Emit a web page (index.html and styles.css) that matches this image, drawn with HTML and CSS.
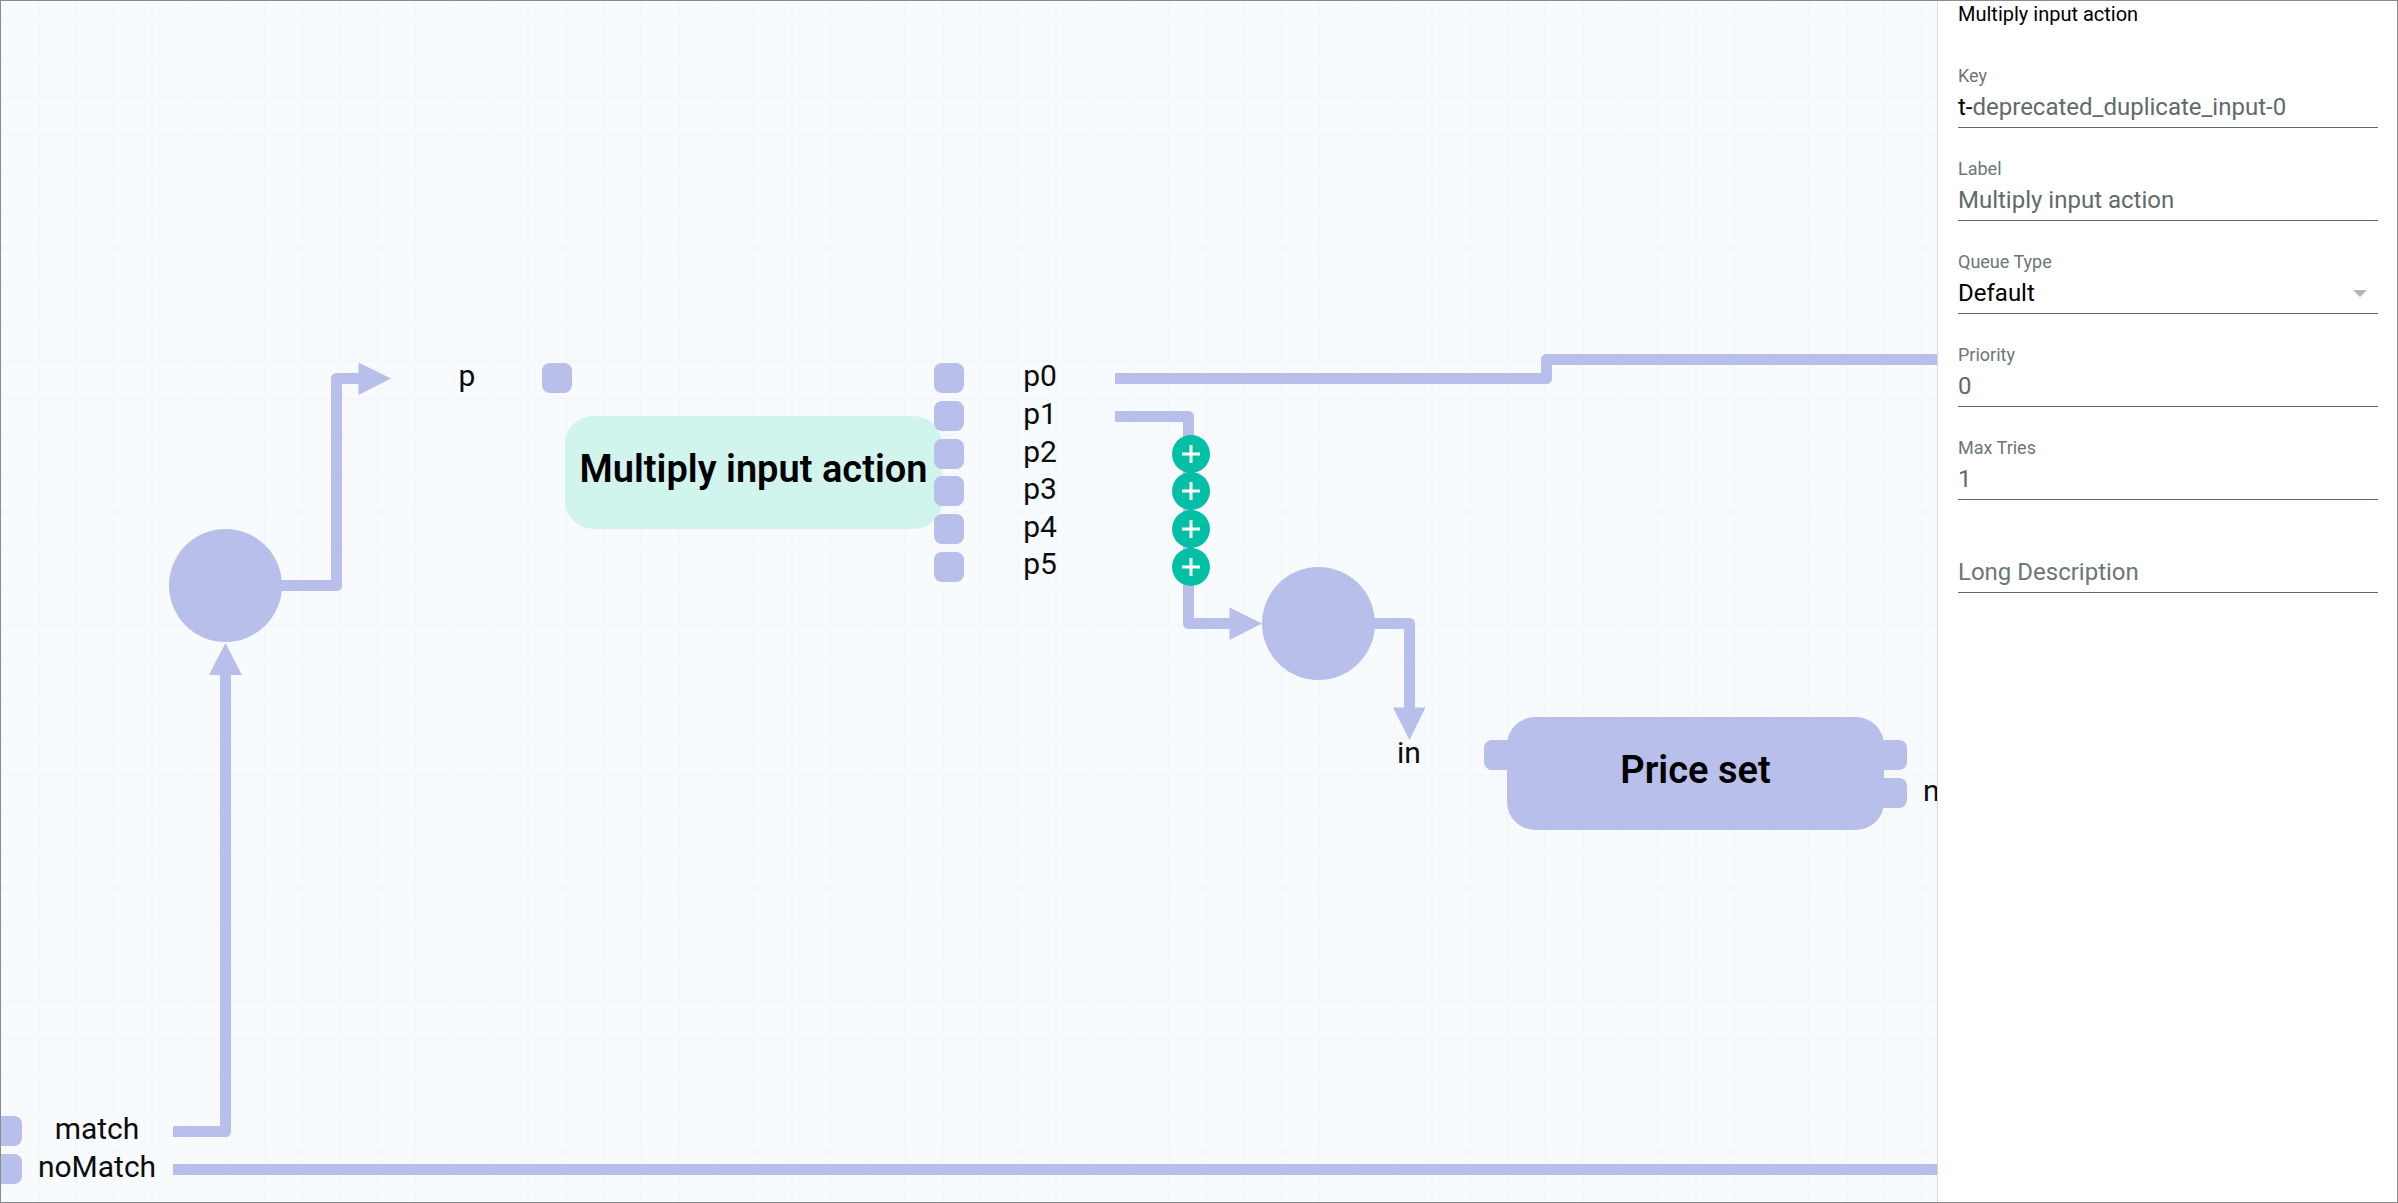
FILE: index.html
```html
<!DOCTYPE html>
<html lang="en">
<head>
<meta charset="utf-8">
<title>Flow editor</title>
<link rel="stylesheet" href="styles.css">
</head>
<body>
<div class="editor">
  <main class="canvas">
    <svg class="layer" aria-hidden="true">
      <defs>
        <pattern id="grid" width="113" height="113" y="21" patternUnits="userSpaceOnUse">
          <path class="grid-line" d="M0 0H113M0 38H113M0 75H113M0 0V113M38 0V113M75 0V113M113 0V113M0 113H113"/>
        </pattern>
      </defs>
      <rect width="100%" height="100%" fill="url(#grid)"/>
      <g class="edges">
        <path d="M172 1130.500H224.500V670"/>
        <path d="M172 1168.500H2400"/>
        <path d="M270 584.500H335.500V377.500H362"/>
        <path d="M1114 377.500H1545.500V358.500H2400"/>
        <path d="M1114 415.500H1187.500V622.500H1232"/>
        <path d="M1360 622.500H1408.500V710"/>
      </g>
      <g class="arrows">
        <path d="M357.500 361.500L390 377.500L357.500 394Z"/>
        <path d="M208 674L224.500 642L241 674Z"/>
        <path d="M1228.500 606.500L1261 622.500L1228.500 639Z"/>
        <path d="M1392 706.500L1408.500 739L1424.500 706.500Z"/>
      </g>
    </svg>

    <div class="joint" style="left:168px;top:528px"></div>
    <div class="joint" style="left:1261px;top:566px"></div>

    <div class="node node-selected" style="left:564px;top:415px">Multiply input action</div>
    <div class="node" style="left:1506px;top:716px">Price set</div>

    <i class="port" style="left:541px;top:362px"></i>
    <i class="port" style="left:933px;top:362px"></i>
    <i class="port" style="left:933px;top:400px"></i>
    <i class="port" style="left:933px;top:438px"></i>
    <i class="port" style="left:933px;top:475px"></i>
    <i class="port" style="left:933px;top:513px"></i>
    <i class="port" style="left:933px;top:551px"></i>
    <i class="port" style="left:1483px;top:739px"></i>
    <i class="port" style="left:1876px;top:739px"></i>
    <i class="port" style="left:1876px;top:777px"></i>
    <i class="port" style="left:-9px;top:1115px"></i>
    <i class="port" style="left:-9px;top:1153px"></i>

    <span class="port-label" style="left:466px;top:375px">p</span>
    <span class="port-label" style="left:1039px;top:375px">p0</span>
    <span class="port-label" style="left:1039px;top:413px">p1</span>
    <span class="port-label" style="left:1039px;top:451px">p2</span>
    <span class="port-label" style="left:1039px;top:488px">p3</span>
    <span class="port-label" style="left:1039px;top:526px">p4</span>
    <span class="port-label" style="left:1039px;top:563px">p5</span>
    <span class="port-label" style="left:1408px;top:752px">in</span>
    <span class="port-label" style="left:1981px;top:790px">noMatch</span>
    <span class="port-label" style="left:96px;top:1128px">match</span>
    <span class="port-label" style="left:96px;top:1166px">noMatch</span>

    <button class="add" type="button" aria-label="Connect p2" style="left:1171px;top:434px"><svg viewBox="0 0 38 38"><path d="M10 19H28M19 10V28"/></svg></button>
    <button class="add" type="button" aria-label="Connect p3" style="left:1171px;top:471px"><svg viewBox="0 0 38 38"><path d="M10 19H28M19 10V28"/></svg></button>
    <button class="add" type="button" aria-label="Connect p4" style="left:1171px;top:509px"><svg viewBox="0 0 38 38"><path d="M10 19H28M19 10V28"/></svg></button>
    <button class="add" type="button" aria-label="Connect p5" style="left:1171px;top:547px"><svg viewBox="0 0 38 38"><path d="M10 19H28M19 10V28"/></svg></button>
  </main>

  <aside class="panel">
    <h1 class="panel-title">Multiply input action</h1>
    <form class="fields">
      <div class="field">
        <label for="key">Key</label>
        <div class="control"><span class="prefix">t-</span><input id="key" type="text" value="deprecated_duplicate_input-0"></div>
      </div>
      <div class="field">
        <label for="label">Label</label>
        <div class="control"><input id="label" type="text" value="Multiply input action"></div>
      </div>
      <div class="field">
        <label for="queue">Queue Type</label>
        <div class="control"><select id="queue"><option>Default</option></select><svg class="caret" viewBox="0 0 14 7" aria-hidden="true"><path d="M0 0H14L7 7Z"/></svg></div>
      </div>
      <div class="field">
        <label for="priority">Priority</label>
        <div class="control"><input id="priority" type="text" inputmode="numeric" value="0"></div>
      </div>
      <div class="field">
        <label for="tries">Max Tries</label>
        <div class="control"><input id="tries" type="text" inputmode="numeric" value="1"></div>
      </div>
      <div class="field">
        <div class="control"><input id="description" type="text" placeholder="Long Description" aria-label="Long Description"></div>
      </div>
    </form>
  </aside>
</div>
</body>
</html>
```
FILE: styles.css
```css
* { box-sizing: border-box; }

body {
  margin: 0;
  font-family: Roboto, "Liberation Sans", sans-serif;
  color: #000;
}

.editor {
  display: flex;
  min-height: 100vh;
  border: 1px solid #8c8c8c;
  background: #fff;
}

/* Flow canvas */
.canvas {
  position: relative;
  flex: 1;
  overflow: hidden;
  background: #f7fbfe;
}

.layer {
  position: absolute;
  inset: 0;
  width: 100%;
  height: 100%;
}

.grid-line { fill: none; stroke: #f5f7f8; stroke-width: 2; }
.edges { fill: none; stroke: #b7bfea; stroke-width: 11; stroke-linejoin: round; }
.arrows { fill: #b7bfea; }

.joint,
.node,
.port,
.port-label,
.add { position: absolute; }

.joint {
  width: 113px;
  height: 113px;
  border-radius: 50%;
  background: #b7bfea;
}

.node {
  display: flex;
  align-items: center;
  justify-content: center;
  width: 377px;
  height: 113px;
  padding-bottom: 7px;
  border-radius: 28px;
  background: #b7bfea;
  font-size: 38px;
  font-weight: 600;
  line-height: 44px;
  white-space: nowrap;
}

.node-selected { background: #d1f4ed; }

.port {
  width: 30px;
  height: 30px;
  border-radius: 8px;
  background: #b7bfea;
}

.port-label {
  transform: translate(-50%, -50%);
  font-size: 30px;
  line-height: 36px;
  color: #0c0c0c;
}

.add {
  width: 38px;
  height: 38px;
  padding: 0;
  border: 0;
  border-radius: 50%;
  background: #02bfa6;
}

.add svg { display: block; fill: none; stroke: #fff; stroke-width: 3; }

/* Properties panel */
.panel {
  width: 460px;
  padding: 0 19px 0 20px;
  border-left: 1px solid #d9d9d9;
  background: #fff;
}

.panel-title {
  margin: 0;
  font-size: 20px;
  font-weight: 400;
  line-height: 26px;
}

.fields {
  display: flex;
  flex-direction: column;
  padding-top: 34px;
}

.field {
  display: flex;
  flex-direction: column;
  justify-content: flex-end;
  height: 93px;
}

.field:first-child { height: 67px; }

.field label {
  font-size: 18px;
  line-height: 24px;
  color: #6b7776;
}

.control {
  display: flex;
  align-items: center;
  height: 40px;
  padding-bottom: 1px;
  border-bottom: 1px solid #5f6b6a;
  font-size: 24px;
}

.control input,
.control select {
  flex: 1;
  min-width: 0;
  padding: 0;
  border: 0;
  outline: 0;
  background: transparent;
  appearance: none;
  font: inherit;
  color: #5f6b6b;
}

.control select { color: #000; }
.control input::placeholder { color: #6b7776; opacity: 1; }

.caret {
  width: 14px;
  height: 7px;
  margin-right: 11px;
  fill: #b4b4b4;
}
```
